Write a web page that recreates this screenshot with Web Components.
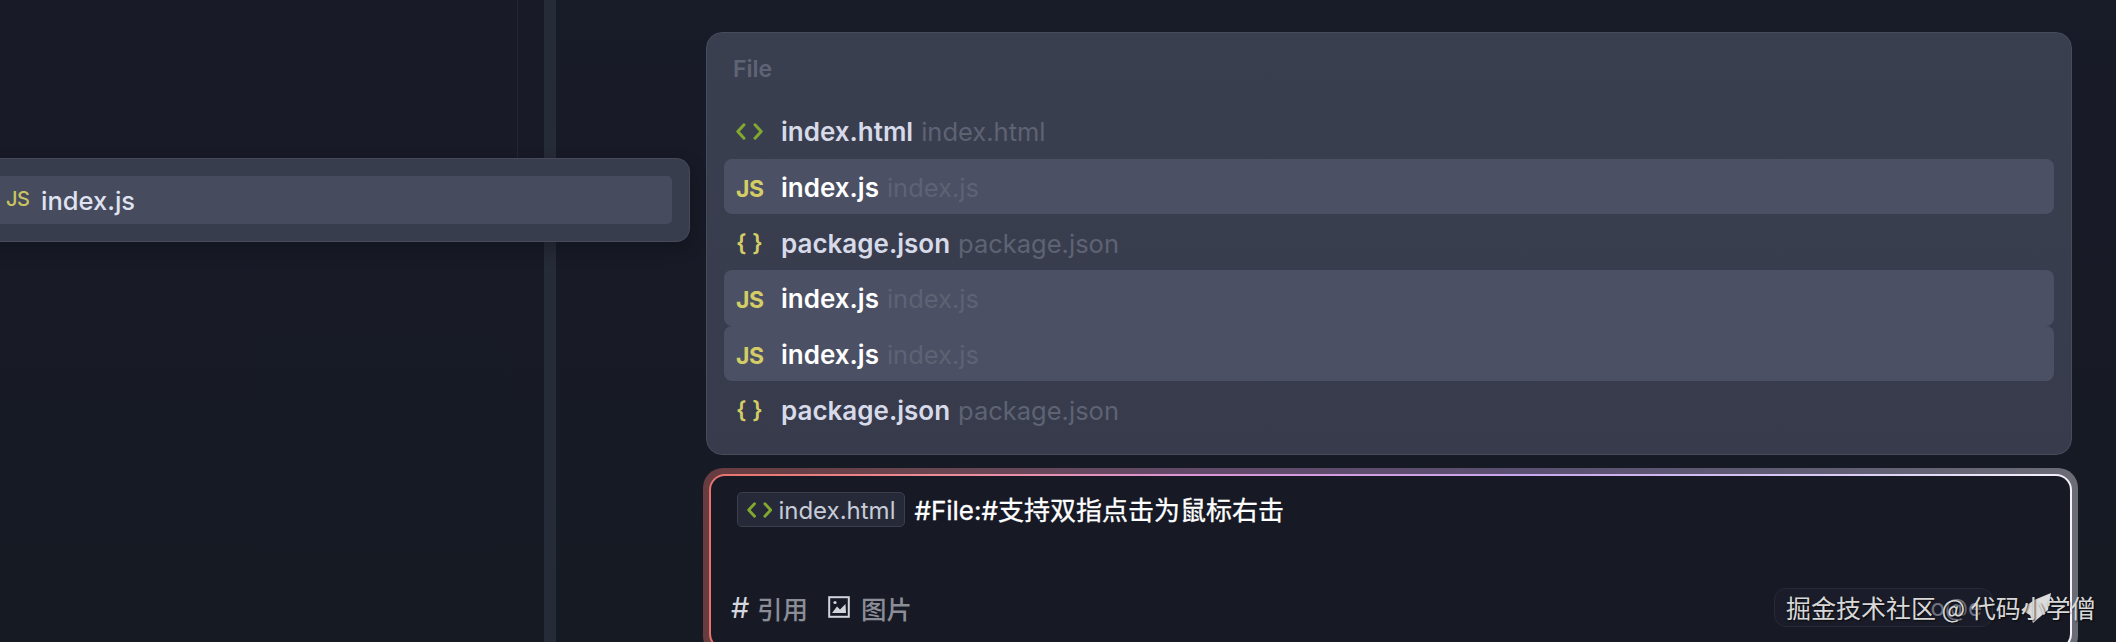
<!DOCTYPE html>
<html>
<head>
<meta charset="utf-8">
<style>
html, body { margin: 0; height: 642px; overflow: hidden; background: #171a25; }
body { font-family: Inter, "Noto Sans CJK SC", sans-serif; }
</style>
</head>
<body>
<app-shell>
  <left-pane slot="left"></left-pane>
  <drag-chip slot="left">index.js</drag-chip>
  <file-panel slot="right" title="File">
    <file-row type="html" desc="index.html">index.html</file-row>
    <file-row type="js" desc="index.js" active>index.js</file-row>
    <file-row type="json" desc="package.json">package.json</file-row>
    <file-row type="js" desc="index.js" active>index.js</file-row>
    <file-row type="js" desc="index.js" active>index.js</file-row>
    <file-row type="json" desc="package.json">package.json</file-row>
  </file-panel>
  <chat-input slot="right">#File:#支持双指点击为鼠标右击</chat-input>
</app-shell>
<water-mark></water-mark>

<script>
const iconStyle = `
.ic{ display:inline-flex; align-items:center; justify-content:flex-start; font-family:Inter,sans-serif; font-weight:700; color:#d3cd66; line-height:1; }
.ic svg{ display:block; }
`;

function fileIcon(type, size){
    if (type === 'html') {
        const w = size * 27 / 17;
        return `<span class="ic"><svg width="${w}" height="${size}" viewBox="0 0 27 17" fill="none" stroke="#83a82f" stroke-width="3" stroke-linecap="round" stroke-linejoin="round"><path d="M8 1.8 L1.8 8.5 L8 15.2"/><path d="M19 1.8 L25.2 8.5 L19 15.2"/></svg></span>`;
    }
    if (type === 'js') {
        return `<span class="ic" style="font-size:${size}px;letter-spacing:-.5px;padding-top:4px">JS</span>`;
    }
    return `<span class="ic" style="font-size:${size}px;font-weight:600">{ }</span>`;
}

class AppShell extends HTMLElement{
    constructor(){
        super();
        this.attachShadow({ mode: 'open' });
        this.shadowRoot.innerHTML = `
<style>
:host{ display:flex; height:642px; background:linear-gradient(#181b28,#161a23); color:#fff; }
.left{ position:relative; width:544px; flex:none; border-right:12px solid #262b38; }
.right{ flex:1; display:flex; flex-direction:column; padding:32px 38px 0 147px; }
</style>
<div class="left"><slot name="left"></slot></div>
<div class="right"><slot name="right"></slot></div>`;
    }
}

class LeftPane extends HTMLElement{
    constructor(){
        super();
        this.attachShadow({ mode: 'open' });
        this.shadowRoot.innerHTML = `
<style>
:host{ display:block; height:158px; background:#181b27; border-bottom-right-radius:14px; position:relative; }
.line{ height:100%; width:517px; border-right:1px solid #232734; }
</style>
<div class="line"></div>`;
    }
}

class DragChip extends HTMLElement{
    constructor(){
        super();
        this.attachShadow({ mode: 'open' });
        this.shadowRoot.innerHTML = `
<style>
${iconStyle}
:host{ position:absolute; left:-40px; top:158px; width:730px; height:84px; box-sizing:border-box; padding:17px 17px 17px 0; background:#383d4e; border:1px solid #464a5a; border-left:0; border-radius:0 14px 14px 0; box-shadow:0 6px 16px rgba(10,12,18,.35); }
.row{ height:48px; background:#464b5e; border-radius:0 5px 5px 0; display:flex; align-items:center; padding-left:46px; font-size:25.5px; font-weight:500; color:#dfe2f0; }
.ic{ width:35px; color:#c9c55f; font-weight:500 !important; padding-top:0 !important; padding-bottom:2px; }
</style>
<div class="row">${fileIcon('js', 20)}<slot></slot></div>`;
    }
}

class FilePanel extends HTMLElement{
    constructor(){
        super();
        this.attachShadow({ mode: 'open' });
        this.shadowRoot.innerHTML = `
<style>
:host{ display:block; flex:none; box-sizing:border-box; height:423px; margin-left:3px; margin-right:6px; padding:0 17px; background:linear-gradient(#3a3f50,#373b4c); border:1px solid #474b5c; border-radius:16px; }
h4{ margin:0; height:72px; margin-bottom:-2px; display:flex; align-items:center; padding:0 0 0 9px; font-size:23px; font-weight:600; color:#5f6475; }
</style>
<h4></h4>
<slot></slot>`;
        this.shadowRoot.querySelector('h4').textContent = this.getAttribute('title');
    }
}

class FileRow extends HTMLElement{
    constructor(){
        super();
        this.attachShadow({ mode: 'open' });
        this.shadowRoot.innerHTML = `
<style>
${iconStyle}
:host{ display:flex; align-items:center; box-sizing:border-box; height:55.7px; padding:2px 0 0 12px; border-radius:8px; font-size:26px; font-weight:600; color:#d7dae8; }
:host([active]){ background:#4b5064; color:#fff; }
.icon{ width:45px; flex:none; display:flex; }
.desc{ margin-left:8px; font-size:25.5px; font-weight:400; color:#5e6374; }
</style>
<span class="icon"></span><slot></slot><span class="desc"></span>`;
        const type = this.getAttribute('type');
        this.shadowRoot.querySelector('.icon').innerHTML = fileIcon(type, type === 'html' ? 17 : 23);
        this.shadowRoot.querySelector('.desc').textContent = this.getAttribute('desc');
    }
}

class ChatInput extends HTMLElement{
    constructor(){
        super();
        this.attachShadow({ mode: 'open' });
        const grad = 'linear-gradient(90deg,#e8736c 0%,#ec8f9c 18%,#dc96d8 36%,#c9a8ee 60%,#dcd0f6 85%,#f4f2fb 100%)';
        this.shadowRoot.innerHTML = `
<style>
${iconStyle}
:host{ display:block; flex:none; position:relative; margin-top:13px; padding:6px; height:188px; box-sizing:border-box; border-radius:20px; color:#fff; }
.halo{ position:absolute; inset:0; border-radius:20px; background:${grad}; opacity:.38; }
.ring{ position:relative; padding:2px; height:176px; box-sizing:border-box; border-radius:16px; background:${grad}; }
.body{ height:100%; box-sizing:border-box; border-radius:14px; background:#171a25; padding:16px 0 0 26px; }
.top{ display:flex; align-items:center; gap:9px; height:35px; }
.chip{ display:flex; align-items:center; box-sizing:border-box; height:35px; padding:0 9px 0 9px; gap:6px; background:#262a38; border:1px solid #3a3e4d; border-radius:5px; font-size:24px; color:#c8cbd8; }
.chip > span:last-child, .text{ position:relative; top:1px; }
.text{ font-size:26px; font-weight:400; line-height:35px; font-family:Inter,"Noto Sans CJK SC",sans-serif; -webkit-text-stroke:.3px #fff; }
.tools{ display:flex; align-items:center; margin:58px 0 0 -6px; height:44px; font-size:25.5px; font-weight:500; color:#8b8d97; font-family:Inter,"Noto Sans CJK SC",sans-serif; }
.hash{ color:#d5d7df; width:26px; font-size:29px; font-weight:400; }
.img{ margin:0 11px 0 20px; display:block; }
</style>
<div class="halo"></div>
<div class="ring"><div class="body">
  <div class="top">
    <span class="chip">${fileIcon('html', 16)}<span>index.html</span></span>
    <span class="text"><slot></slot></span>
  </div>
  <div class="tools">
    <span class="hash">#</span><span>引用</span>
    <svg class="img" width="22" height="22" viewBox="0 0 22 22"><rect x="1.2" y="1.2" width="19.6" height="19.6" fill="none" stroke="#d2d4dc" stroke-width="2"/><path d="M4 17 L9 10.5 L12 13.5 L17.5 8 L18 17 Z" fill="#d2d4dc"/><circle cx="7" cy="6.5" r="1.6" fill="#d2d4dc"/></svg>
    <span>图片</span>
  </div>
</div></div>`;
    }
}

class WaterMark extends HTMLElement{
    constructor(){
        super();
        this.attachShadow({ mode: 'open' });
        this.shadowRoot.innerHTML = `
<style>
:host{ position:absolute; left:1774px; top:588px; width:340px; height:40px; font-family:"Noto Sans CJK SC",sans-serif; }
.pill{ position:absolute; left:0; top:0; width:219px; height:39px; box-sizing:border-box; border:1px solid #272b37; border-radius:12px; background:#1a1d29; color:#6f7280; font:24px/37px Inter,sans-serif; text-align:right; padding-right:10px; }
.mark{ position:absolute; left:12px; top:0; white-space:nowrap; font-size:25px; line-height:38px; color:#d8d8d8; text-shadow:1px 1px 2px rgba(0,0,0,.75); }
svg{ position:absolute; left:246px; top:3px; }
</style>
<div class="pill">o@e</div>
<svg width="34" height="34" viewBox="0 0 34 34"><path d="M31 2 L28 19 L13 32 L10 24 L1 19 L14 9 Z" fill="#dcdcdc"/></svg>
<div class="mark">掘金技术社区 @ 代码小学僧</div>`;
    }
}

customElements.define('app-shell', AppShell);
customElements.define('left-pane', LeftPane);
customElements.define('drag-chip', DragChip);
customElements.define('file-panel', FilePanel);
customElements.define('file-row', FileRow);
customElements.define('chat-input', ChatInput);
customElements.define('water-mark', WaterMark);
</script>
</body>
</html>
